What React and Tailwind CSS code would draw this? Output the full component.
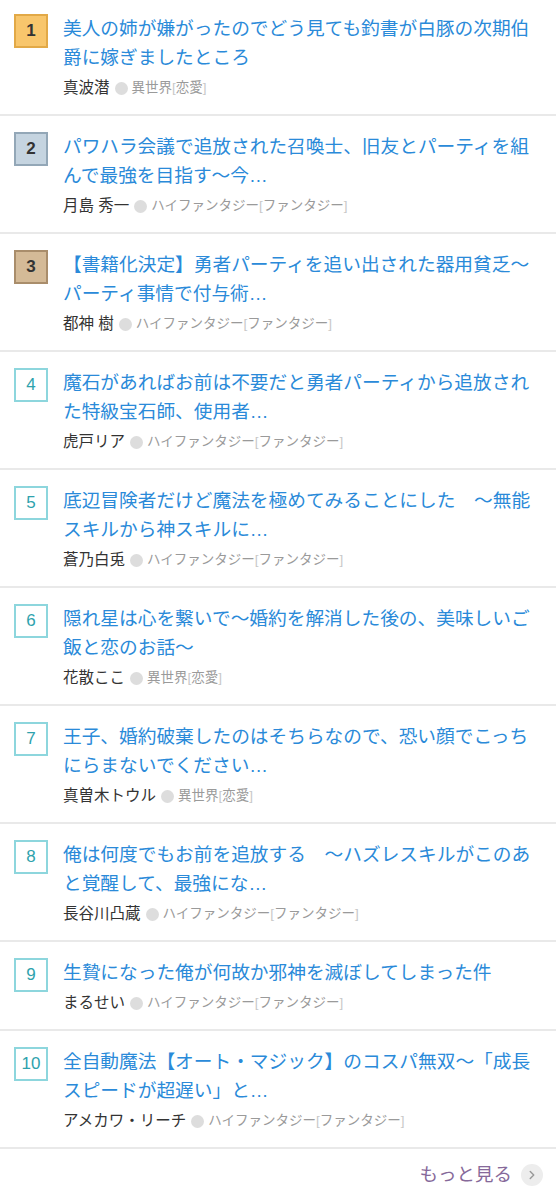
import { ChevronRight } from 'lucide-react';

const ranking = [
  { title: '美人の姉が嫌がったのでどう見ても釣書が白豚の次期伯爵に嫁ぎましたところ', author: '真波潜', genre: '異世界', sub: '恋愛' },
  { title: 'パワハラ会議で追放された召喚士、旧友とパーティを組んで最強を目指す～今…', author: '月島 秀一', genre: 'ハイファンタジー', sub: 'ファンタジー' },
  { title: '【書籍化決定】勇者パーティを追い出された器用貧乏～パーティ事情で付与術…', author: '都神 樹', genre: 'ハイファンタジー', sub: 'ファンタジー' },
  { title: '魔石があればお前は不要だと勇者パーティから追放された特級宝石師、使用者…', author: '虎戸リア', genre: 'ハイファンタジー', sub: 'ファンタジー' },
  { title: '底辺冒険者だけど魔法を極めてみることにした　～無能スキルから神スキルに…', author: '蒼乃白兎', genre: 'ハイファンタジー', sub: 'ファンタジー' },
  { title: '隠れ星は心を繋いで～婚約を解消した後の、美味しいご飯と恋のお話～', author: '花散ここ', genre: '異世界', sub: '恋愛' },
  { title: '王子、婚約破棄したのはそちらなので、恐い顔でこっちにらまないでください…', author: '真曽木トウル', genre: '異世界', sub: '恋愛' },
  { title: '俺は何度でもお前を追放する　～ハズレスキルがこのあと覚醒して、最強にな…', author: '長谷川凸蔵', genre: 'ハイファンタジー', sub: 'ファンタジー' },
  { title: '生贄になった俺が何故か邪神を滅ぼしてしまった件', author: 'まるせい', genre: 'ハイファンタジー', sub: 'ファンタジー' },
  { title: '全自動魔法【オート・マジック】のコスパ無双～「成長スピードが超遅い」と…', author: 'アメカワ・リーチ', genre: 'ハイファンタジー', sub: 'ファンタジー' },
];

// medal colours for the top three, plain outline for the rest
const badgeStyles = {
  1: 'bg-[#f8c66c] border-[#e2a947] text-[#333] font-bold',
  2: 'bg-[#c5d4e0] border-[#93a7b7] text-[#333] font-bold',
  3: 'bg-[#d4ba97] border-[#a98d6b] text-[#333] font-bold',
};

function RankBadge({ rank }) {
  const style = badgeStyles[rank] || 'bg-white border-[#8dd6dd] text-[#2ea2ad] font-normal';
  return (
    <div className={`w-[34px] h-[34px] shrink-0 border-2 flex items-center justify-center text-[17px] ${style}`}>
      {rank}
    </div>
  );
}

function RankRow({ rank, item }) {
  return (
    <li className={`flex gap-[15px] pl-[14px] pr-[16px] pb-[12px] border-b-2 border-[#e9e9e9] ${rank === 1 ? 'pt-[14px]' : 'pt-[16px]'}`}>
      <RankBadge rank={rank} />
      <div className="flex-1 min-w-0">
        <a className="block text-[18.7px] leading-[29px] text-[#2a8ad9]">{item.title}</a>
        <div className="flex items-center mt-[2px] leading-[28px]">
          <span className="text-[15.5px] text-[#333]">{item.author}</span>
          <span className="w-[13px] h-[13px] rounded-full bg-[#dddddd] ml-[5px] mr-[4px]"></span>
          <span className="text-[13.5px] text-[#9a9a9a]">{item.genre}</span>
          <span className="text-[13.5px] text-[#c8c8c8]">[</span>
          <span className="text-[13.5px] text-[#9a9a9a]">{item.sub}</span>
          <span className="text-[13.5px] text-[#c8c8c8]">]</span>
        </div>
      </div>
    </li>
  );
}

export default function App() {
  return (
    <div className="w-[556px] min-h-[1200px] bg-white" style={{ fontFamily: '"Liberation Sans", "Noto Sans CJK JP", sans-serif' }}>
      <ul>
        {ranking.map((item, i) => (
          <RankRow key={i} rank={i + 1} item={item} />
        ))}
      </ul>
      <div className="flex items-center justify-end h-[54px] pr-[13px] border-b-2 border-[#e9e9e9]">
        <span className="text-[18.5px] text-[#86699a]">もっと見る</span>
        <span className="ml-[9px] w-[22px] h-[22px] rounded-full bg-[#ededed] flex items-center justify-center">
          <ChevronRight size={14} strokeWidth={2.5} className="text-[#9a9a9a]" />
        </span>
      </div>
    </div>
  );
}
